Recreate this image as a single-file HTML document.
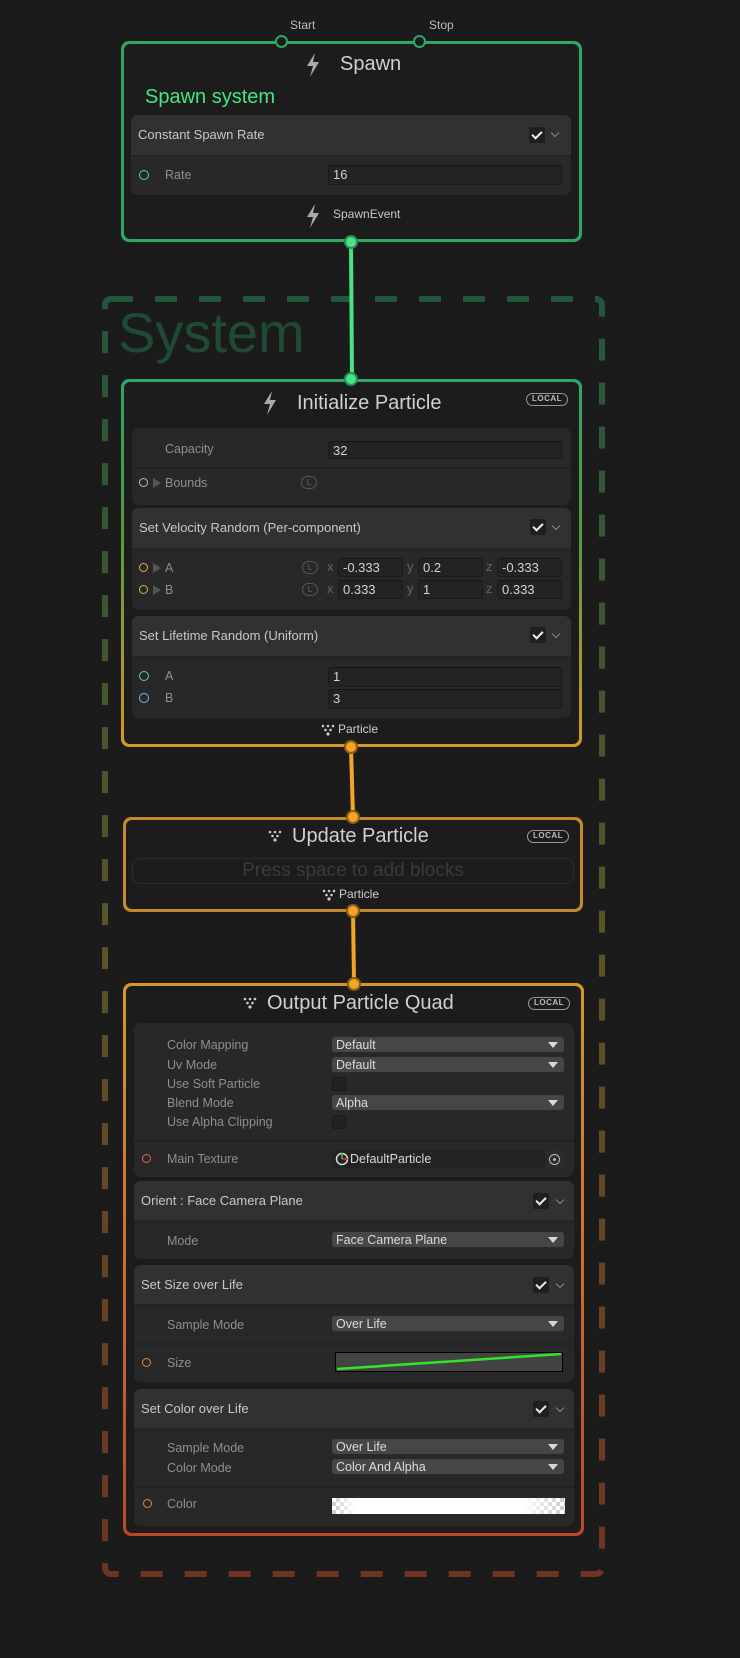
<!DOCTYPE html>
<html><head><meta charset="utf-8"><style>
*{margin:0;padding:0;box-sizing:border-box}
body{width:740px;height:1658px;background:#1b1b1b;position:relative;overflow:hidden;font-family:"Liberation Sans","DejaVu Sans",sans-serif;color:#c4c4c4}
.a{position:absolute}
.node{position:absolute;border-radius:8px;padding:3px}
.node>.in{width:100%;height:100%;background:#1c1c1c;border-radius:6px}
.blk{position:absolute;background:#282828;border-radius:7px;overflow:hidden}
.hd{position:absolute;left:0;right:0;top:0;background:#313131;border-bottom:2px solid #242424}
.hdt{position:absolute;left:7px;font-size:13px;color:#c8c8c8}
.lab{position:absolute;font-size:12.5px;color:#8e8e8e;line-height:16px}
.inp{position:absolute;background:#232323;border:1px solid #1a1a1a;border-top-color:#151515;border-radius:3px;font-size:13px;color:#d2d2d2;line-height:18px;padding-left:4px}
.dd{position:absolute;background:#464646;border-radius:3px;height:16px;font-size:12.5px;color:#dcdcdc;line-height:16px;padding-left:4px;border-bottom:1px solid #2a2a2a}
.dd:after{content:"";position:absolute;right:6px;top:5px;border-left:5px solid transparent;border-right:5px solid transparent;border-top:6px solid #d8d8d8}
.cb{position:absolute;width:16px;height:16px;background:#222;border-radius:2px;border:1px solid #1a1a1a}
.chk{position:absolute;width:16px;height:16px;background:#1f1f1f;border-radius:2px}
.chk:after{content:"";position:absolute;left:5px;top:2px;width:4px;height:8px;border-right:2px solid #eee;border-bottom:2px solid #eee;transform:rotate(45deg)}
.chev{position:absolute;width:6px;height:6px;border-right:1.5px solid #8a8a8a;border-bottom:1.5px solid #8a8a8a;transform:rotate(45deg)}
.port{position:absolute;width:10px;height:10px;border-radius:50%;border:1.5px solid #5fc9d8}
.title{position:absolute;font-size:20px;color:#d0d0d0;white-space:nowrap}
.local{position:absolute;width:42px;height:13px;border:1.5px solid #999;border-radius:7px;font-size:8px;font-weight:bold;color:#bbb;text-align:center;line-height:10px;letter-spacing:.5px}
.L{position:absolute;width:16px;height:13px;border:1.2px solid #555;border-radius:7px;font-size:8px;color:#666;text-align:center;line-height:11px}
.ax{position:absolute;font-size:13px;color:#666}
.tri{position:absolute;border-top:5px solid transparent;border-bottom:5px solid transparent;border-left:8px solid #555}
</style></head><body>

<svg class="a" style="left:0;top:0" width="740" height="1658">
<defs><linearGradient id="dg" x1="0" y1="296" x2="0" y2="1576" gradientUnits="userSpaceOnUse"><stop offset="0" stop-color="#22573c"/><stop offset="0.5" stop-color="#5a5426"/><stop offset="1" stop-color="#6e3421"/></linearGradient></defs>
<rect x="105" y="299" width="497" height="1275" rx="6" fill="none" stroke="url(#dg)" stroke-width="6" stroke-dasharray="22 22"/>
<text x="118" y="352" font-family="Liberation Sans, sans-serif" font-size="56" fill="#1f4a33">System</text>
<line x1="351" y1="241" x2="352" y2="380" stroke="#47e486" stroke-width="4"/>
<line x1="351" y1="747" x2="353" y2="817" stroke="#f4a526" stroke-width="4"/>
<line x1="353" y1="911" x2="354" y2="983" stroke="#f4a526" stroke-width="4"/>
</svg>

<div class="a" style="left:290px;top:18px;font-size:12px;color:#bdbdbd">Start</div>
<div class="a" style="left:429px;top:18px;font-size:12px;color:#bdbdbd">Stop</div>
<div class="node" style="left:121px;top:41px;width:461px;height:201px;background:#2ea764"><div class="in"></div></div>
<div class="a" style="left:275px;top:35px;width:13px;height:13px;border-radius:50%;border:2px solid #2ea764;background:#1c1c1c"></div>
<div class="a" style="left:413px;top:35px;width:13px;height:13px;border-radius:50%;border:2px solid #2ea764;background:#1c1c1c"></div>
<svg class="a" style="left:304px;top:52px" width="18" height="26" viewBox="0 0 18 26"><path d="M11 1 L3 14 L9 14 L6 25 L15 10 L9 10 Z" fill="#aaa"/></svg>
<div class="title" style="left:340px;top:53px">Spawn</div>
<div class="a" style="left:145px;top:86px;font-size:20px;color:#45e584">Spawn system</div>
<div class="blk" style="left:131px;top:115px;width:440px;height:80px">
 <div class="hd" style="height:42px"><div class="hdt" style="top:12px">Constant Spawn Rate</div><div class="chk" style="left:398px;top:12px"></div><div class="chev" style="left:421px;top:15px"></div></div>
 <div class="port" style="left:8px;top:55px"></div><div class="lab" style="left:34px;top:52px">Rate</div>
 <div class="inp" style="left:197px;top:50px;width:234px;height:20px">16</div>
</div>
<svg class="a" style="left:304px;top:203px" width="18" height="26" viewBox="0 0 18 26"><path d="M11 1 L3 14 L9 14 L6 25 L15 10 L9 10 Z" fill="#aaa"/></svg>
<div class="a" style="left:333px;top:207px;font-size:12px;color:#c8c8c8">SpawnEvent</div>
<div class="a" style="left:344px;top:235px;width:14px;height:14px;border-radius:50%;background:#47e486;border:2px solid #2a8a55"></div>

<div class="node" style="left:121px;top:379px;width:461px;height:368px;background:linear-gradient(#2ea764,#5a9a3a 45%,#d7962a)"><div class="in"></div></div>
<div class="a" style="left:344px;top:372px;width:14px;height:14px;border-radius:50%;background:#47e486;border:2px solid #2a8a55"></div>
<svg class="a" style="left:261px;top:390px" width="18" height="26" viewBox="0 0 18 26"><path d="M11 1 L3 14 L9 14 L6 25 L15 10 L9 10 Z" fill="#aaa"/></svg>
<div class="title" style="left:297px;top:392px">Initialize Particle</div>
<div class="local" style="left:526px;top:393px">LOCAL</div>
<div class="blk" style="left:132px;top:428px;width:439px;height:77px">
 <div class="a" style="left:0;right:0;top:0;height:41px;border-bottom:2px solid #222"></div>
 <div class="lab" style="left:33px;top:13px">Capacity</div>
 <div class="inp" style="left:196px;top:13px;width:234px;height:18px">32</div>
 <div class="port" style="left:7px;top:50px;border-color:#bbb;width:9px;height:9px"></div><div class="tri" style="left:21px;top:50px"></div>
 <div class="lab" style="left:33px;top:47px">Bounds</div>
 <div class="L" style="left:169px;top:48px">L</div>
</div>
<div class="blk" style="left:132px;top:508px;width:439px;height:102px">
 <div class="hd" style="height:42px"><div class="hdt" style="top:12px">Set Velocity Random (Per-component)</div><div class="chk" style="left:398px;top:11px"></div><div class="chev" style="left:421px;top:15px"></div></div>
 <div class="port" style="left:7px;top:55px;border-color:#e3b23c;width:9px;height:9px"></div><div class="tri" style="left:21px;top:55px"></div><div class="lab" style="left:33px;top:52px">A</div>
 <div class="L" style="left:170px;top:53px">L</div>
 <div class="ax" style="left:195px;top:51px">x</div><div class="inp" style="left:206px;top:50px;width:65px;height:19px">-0.333</div>
 <div class="ax" style="left:275px;top:51px">y</div><div class="inp" style="left:286px;top:50px;width:65px;height:19px">0.2</div>
 <div class="ax" style="left:354px;top:51px">z</div><div class="inp" style="left:365px;top:50px;width:65px;height:19px">-0.333</div>
 <div class="port" style="left:7px;top:77px;border-color:#e3b23c;width:9px;height:9px"></div><div class="tri" style="left:21px;top:77px"></div><div class="lab" style="left:33px;top:74px">B</div>
 <div class="L" style="left:170px;top:75px">L</div>
 <div class="ax" style="left:195px;top:73px">x</div><div class="inp" style="left:206px;top:72px;width:65px;height:19px">0.333</div>
 <div class="ax" style="left:275px;top:73px">y</div><div class="inp" style="left:286px;top:72px;width:65px;height:19px">1</div>
 <div class="ax" style="left:354px;top:73px">z</div><div class="inp" style="left:365px;top:72px;width:65px;height:19px">0.333</div>
</div>
<div class="blk" style="left:132px;top:616px;width:439px;height:102px">
 <div class="hd" style="height:42px"><div class="hdt" style="top:12px">Set Lifetime Random (Uniform)</div><div class="chk" style="left:398px;top:11px"></div><div class="chev" style="left:421px;top:15px"></div></div>
 <div class="port" style="left:7px;top:55px"></div><div class="lab" style="left:33px;top:52px">A</div>
 <div class="inp" style="left:196px;top:51px;width:234px;height:20px">1</div>
 <div class="port" style="left:7px;top:77px"></div><div class="lab" style="left:33px;top:74px">B</div>
 <div class="inp" style="left:196px;top:73px;width:234px;height:20px">3</div>
</div>
<svg class="a" style="left:321px;top:724px" width="14" height="12" viewBox="0 0 14 12"><circle cx="2" cy="2" r="1.3" fill="#ccc"/><circle cx="7" cy="2" r="1.3" fill="#ccc"/><circle cx="12" cy="2" r="1.3" fill="#ccc"/><circle cx="4.5" cy="6" r="1.3" fill="#ccc"/><circle cx="9.5" cy="6" r="1.3" fill="#ccc"/><circle cx="7" cy="10" r="1.6" fill="#ccc"/></svg>
<div class="a" style="left:338px;top:722px;font-size:12px;color:#d0d0d0">Particle</div>
<div class="a" style="left:344px;top:740px;width:14px;height:14px;border-radius:50%;background:#f4a526;border:2px solid #8a5c16"></div>

<div class="node" style="left:123px;top:817px;width:460px;height:95px;background:#c48a2a"><div class="in"></div></div>
<div class="a" style="left:346px;top:810px;width:14px;height:14px;border-radius:50%;background:#f4a526;border:2px solid #8a5c16"></div>
<svg class="a" style="left:268px;top:830px" width="14" height="12" viewBox="0 0 14 12"><circle cx="2" cy="2" r="1.3" fill="#ccc"/><circle cx="7" cy="2" r="1.3" fill="#ccc"/><circle cx="12" cy="2" r="1.3" fill="#ccc"/><circle cx="4.5" cy="6" r="1.3" fill="#ccc"/><circle cx="9.5" cy="6" r="1.3" fill="#ccc"/><circle cx="7" cy="10" r="1.6" fill="#ccc"/></svg>
<div class="title" style="left:292px;top:825px">Update Particle</div>
<div class="local" style="left:527px;top:830px">LOCAL</div>
<div class="a" style="left:132px;top:858px;width:442px;height:26px;border:1px solid #2c2c2c;border-radius:8px;text-align:center;font-size:19px;color:#3a3a3a;line-height:24px">Press space to add blocks</div>
<svg class="a" style="left:322px;top:889px" width="14" height="12" viewBox="0 0 14 12"><circle cx="2" cy="2" r="1.3" fill="#ccc"/><circle cx="7" cy="2" r="1.3" fill="#ccc"/><circle cx="12" cy="2" r="1.3" fill="#ccc"/><circle cx="4.5" cy="6" r="1.3" fill="#ccc"/><circle cx="9.5" cy="6" r="1.3" fill="#ccc"/><circle cx="7" cy="10" r="1.6" fill="#ccc"/></svg>
<div class="a" style="left:339px;top:887px;font-size:12px;color:#d0d0d0">Particle</div>
<div class="a" style="left:346px;top:904px;width:14px;height:14px;border-radius:50%;background:#f4a526;border:2px solid #8a5c16"></div>

<div class="node" style="left:123px;top:983px;width:461px;height:553px;background:linear-gradient(#d7962a,#c9702c 50%,#bb4628)"><div class="in"></div></div>
<div class="a" style="left:347px;top:977px;width:14px;height:14px;border-radius:50%;background:#f4a526;border:2px solid #8a5c16"></div>
<svg class="a" style="left:243px;top:997px" width="14" height="12" viewBox="0 0 14 12"><circle cx="2" cy="2" r="1.3" fill="#ccc"/><circle cx="7" cy="2" r="1.3" fill="#ccc"/><circle cx="12" cy="2" r="1.3" fill="#ccc"/><circle cx="4.5" cy="6" r="1.3" fill="#ccc"/><circle cx="9.5" cy="6" r="1.3" fill="#ccc"/><circle cx="7" cy="10" r="1.6" fill="#ccc"/></svg>
<div class="title" style="left:267px;top:992px">Output Particle Quad</div>
<div class="local" style="left:528px;top:997px">LOCAL</div>

<div class="blk" style="left:134px;top:1023px;width:440px;height:154px">
 <div class="a" style="left:0;right:0;top:0;height:119px;border-bottom:2px solid #222"></div>
 <div class="lab" style="left:33px;top:14px">Color Mapping</div><div class="dd" style="left:198px;top:14px;width:232px">Default</div>
 <div class="lab" style="left:33px;top:34px">Uv Mode</div><div class="dd" style="left:198px;top:34px;width:232px">Default</div>
 <div class="lab" style="left:33px;top:53px">Use Soft Particle</div><div class="cb" style="left:198px;top:54px;width:14px;height:14px"></div>
 <div class="lab" style="left:33px;top:72px">Blend Mode</div><div class="dd" style="left:198px;top:72px;width:232px">Alpha</div>
 <div class="lab" style="left:33px;top:91px">Use Alpha Clipping</div><div class="cb" style="left:198px;top:92px;width:14px;height:14px"></div>
 <div class="port" style="left:8px;top:131px;border-color:#e06060;width:9px;height:9px"></div>
 <div class="lab" style="left:33px;top:128px">Main Texture</div>
 <div class="a" style="left:198px;top:127px;width:233px;height:19px;background:#232323;border-radius:3px"></div>
 <svg class="a" style="left:201px;top:129px" width="14" height="14" viewBox="0 0 14 14"><circle cx="7" cy="7" r="5.5" fill="none" stroke="#ddd" stroke-width="1.5"/><line x1="7" y1="7" x2="7" y2="1" stroke="#3c3" stroke-width="1.5"/><line x1="7" y1="7" x2="13" y2="7" stroke="#e33" stroke-width="1.5"/></svg>
 <div class="a" style="left:216px;top:129px;font-size:12.5px;color:#d8d8d8">DefaultParticle</div>
 <div class="a" style="left:411px;top:127px;width:20px;height:19px;background:#2b2b2b"></div>
 <div class="a" style="left:415px;top:131px;width:11px;height:11px;border-radius:50%;border:1.5px solid #bbb"></div><div class="a" style="left:419px;top:135px;width:3px;height:3px;border-radius:50%;background:#bbb"></div>
</div>

<div class="blk" style="left:134px;top:1181px;width:440px;height:78px">
 <div class="hd" style="height:41px"><div class="hdt" style="top:12px">Orient : Face Camera Plane</div><div class="chk" style="left:399px;top:12px"></div><div class="chev" style="left:423px;top:16px"></div></div>
 <div class="lab" style="left:33px;top:52px">Mode</div><div class="dd" style="left:198px;top:51px;width:232px">Face Camera Plane</div>
</div>

<div class="blk" style="left:134px;top:1265px;width:440px;height:117px">
 <div class="hd" style="height:41px"><div class="hdt" style="top:12px">Set Size over Life</div><div class="chk" style="left:399px;top:12px"></div><div class="chev" style="left:423px;top:16px"></div></div>
 <div class="lab" style="left:33px;top:52px">Sample Mode</div><div class="dd" style="left:198px;top:51px;width:232px">Over Life</div>
 <div class="a" style="left:0;right:0;top:78px;height:2px;background:#222"></div>
 <div class="port" style="left:8px;top:93px;border-color:#e08a40;width:9px;height:9px"></div>
 <div class="lab" style="left:33px;top:90px">Size</div>
 <svg class="a" style="left:201px;top:87px" width="228" height="20"><rect x="0.5" y="0.5" width="227" height="19" fill="#434343" stroke="#000"/><line x1="2" y1="17" x2="226" y2="2" stroke="#33e52a" stroke-width="2.5"/></svg>
</div>

<div class="blk" style="left:134px;top:1389px;width:440px;height:137px">
 <div class="hd" style="height:41px"><div class="hdt" style="top:12px">Set Color over Life</div><div class="chk" style="left:399px;top:12px"></div><div class="chev" style="left:423px;top:16px"></div></div>
 <div class="lab" style="left:33px;top:51px">Sample Mode</div><div class="dd" style="left:198px;top:50px;width:232px">Over Life</div>
 <div class="lab" style="left:33px;top:71px">Color Mode</div><div class="dd" style="left:198px;top:70px;width:232px">Color And Alpha</div>
 <div class="a" style="left:0;right:0;top:97px;height:2px;background:#222"></div>
 <div class="port" style="left:9px;top:110px;border-color:#e08a40;width:9px;height:9px"></div>
 <div class="lab" style="left:33px;top:107px">Color</div>
 <div class="a" style="left:198px;top:109px;width:233px;height:16px;background:linear-gradient(90deg,rgba(255,255,255,0),#fff 10%,#fff 82%,rgba(255,255,255,0)),repeating-conic-gradient(#ccc 0 25%,#fff 0 50%) 0 0/8px 8px"></div>
</div>

</body></html>
